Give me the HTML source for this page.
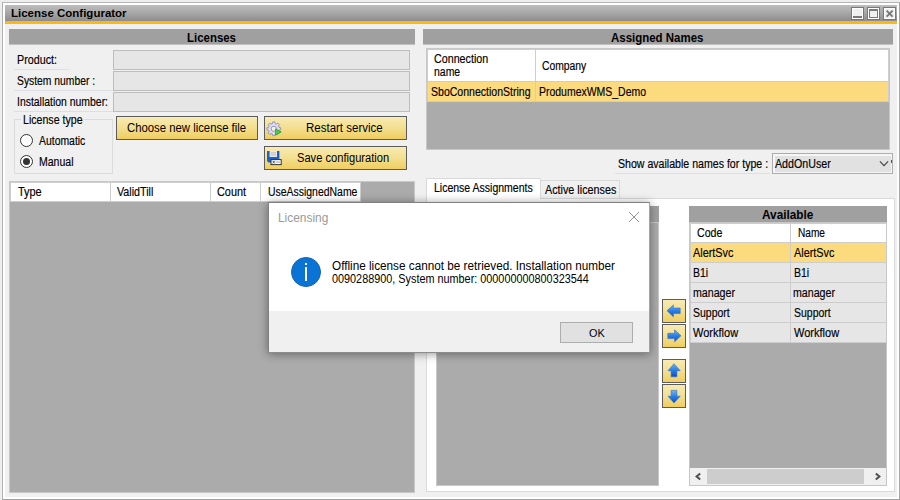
<!DOCTYPE html>
<html lang="en">
<head>
<meta charset="utf-8">
<title>License Configurator</title>
<style>
*{box-sizing:border-box;margin:0;padding:0}
html,body{width:900px;height:500px;overflow:hidden;background:#eee}
body{position:relative;font-family:"Liberation Sans",sans-serif;font-size:12px;color:#000}
.a{position:absolute}
.t{-webkit-text-stroke:0.16px currentColor;position:absolute;white-space:nowrap;line-height:14px;height:14px;transform-origin:0 0}
.b{font-weight:bold;-webkit-text-stroke:0}
.d{-webkit-text-stroke:0}
/* outer frame */
#frame{left:2px;top:2px;width:898px;height:498px;border:1px solid;border-color:#b6b6b6 #a6a6a6 #a0a0a0 #b0b0b0;background:#fff}
#win{left:5px;top:5px;width:892px;height:492px;background:#f0f0f0}
#title{left:5px;top:5px;width:892px;height:16px;background:linear-gradient(#bebebe,#a7a7a7 50%,#8d8d8d)}
#orange{left:5px;top:21px;width:892px;height:3px;background:#fcb813}
.wb{top:7px;width:13px;height:13px;border:1px solid #787878;background:#f0f0f0;box-shadow:inset 0 0 0 1px #fff}
.hdr{background:#a0a0a0;height:16px}
.hs{background:linear-gradient(#a0a0a0,#a0a0a0 15px,#c0c0c0 15px)}
.fld{background:#e6e6e6;border:1px solid #bdbdbd;height:20px;left:113px;width:297px}
.ul{height:1px;background:#dcdfe3}
.grid{background:#ababab;border:1px solid #c8c8c8}
.gl{background:#cdcdcd}
.btn{border:1px solid #5c5c5c;background:linear-gradient(#f7ebb4,#f4df8f 50%,#efcd60);height:24px}
.cell{background:#fff}
.sel{background:#fcdb7f}
.row{background:#e6e6e6}
</style>
</head>
<body>

<svg class="a" width="0" height="0" style="left:0;top:0"><defs>
<linearGradient id="gb" x1="0" y1="0" x2="0" y2="1"><stop offset="0" stop-color="#6db6f8"/><stop offset="0.5" stop-color="#2a7fe6"/><stop offset="1" stop-color="#0a4fc4"/></linearGradient>
<linearGradient id="gbh" x1="0" y1="0" x2="1" y2="0"><stop offset="0" stop-color="#6db6f8"/><stop offset="0.5" stop-color="#2a7fe6"/><stop offset="1" stop-color="#0a4fc4"/></linearGradient>
</defs></svg>
<div class="a" id="frame"></div>
<div class="a" id="win"></div>
<div class="a" id="title"></div>
<div class="a" id="orange"></div>
<span class="t b" id="t_title" style="left:11.1px;top:6px;font-size:11.5px;transform:scaleX(0.9995)">License Configurator</span>

<!-- window buttons -->
<div class="a wb" style="left:851px"></div>
<div class="a wb" style="left:867px"></div>
<div class="a wb" style="left:883px"></div>
<div class="a" style="left:853px;top:16px;width:9px;height:2px;background:#7a7a7a"></div>
<div class="a" style="left:869px;top:9px;width:9px;height:9px;border:1px solid #7a7a7a;border-top-width:2px"></div>
<svg class="a" style="left:885px;top:9px" width="9" height="9" viewBox="0 0 9 9"><path d="M1.6 1.6 L7.6 7.6 M7.6 1.6 L1.6 7.6" stroke="#777" stroke-width="1.9" fill="none"/></svg>

<!-- LEFT: Licenses -->
<div class="a hdr hs" style="left:9px;top:29px;width:406px"></div>
<span class="t b" id="t_lic" style="left:187.0px;top:31px;font-size:12px;transform:scaleX(0.9538)">Licenses</span>

<div class="a fld" style="top:50px"></div>
<div class="a fld" style="top:71px"></div>
<div class="a fld" style="top:92px"></div>
<div class="a ul" style="left:14px;top:69px;width:55px"></div>
<div class="a ul" style="left:14px;top:90px;width:99px"></div>
<div class="a ul" style="left:14px;top:111px;width:99px"></div>
<span class="t" id="t_prod" style="left:16.8px;top:53px;font-size:12px;transform:scaleX(0.8948)">Product:</span>
<span class="t" id="t_sys" style="left:16.8px;top:74px;font-size:12px;transform:scaleX(0.8611)">System number :</span>
<span class="t" id="t_inst" style="left:16.8px;top:95px;font-size:12px;transform:scaleX(0.8689)">Installation number:</span>

<!-- group box -->
<div class="a" style="left:14px;top:119px;width:99px;height:55px;border:1px solid #dcdcdc"></div>
<div class="a" style="left:21px;top:112px;width:63px;height:14px;background:#f0f0f0"></div>
<span class="t" id="t_lt" style="left:22.7px;top:113px;font-size:12px;transform:scaleX(0.8844)">License type</span>
<div class="a" style="left:20px;top:134px;width:13px;height:13px;border:1px solid #333;border-radius:50%;background:#fff"></div>
<div class="a" style="left:20px;top:155px;width:13px;height:13px;border:1px solid #333;border-radius:50%;background:#fff"></div>
<div class="a" style="left:23px;top:158px;width:7px;height:7px;border-radius:50%;background:#333"></div>
<span class="t" id="t_auto" style="left:39.0px;top:134px;font-size:12px;transform:scaleX(0.8677)">Automatic</span>
<span class="t" id="t_man" style="left:39.0px;top:155px;font-size:12px;transform:scaleX(0.8765)">Manual</span>

<!-- buttons -->
<div class="a btn" style="left:116px;top:116px;width:142px"></div>
<div class="a btn" style="left:264px;top:116px;width:143px"></div>
<div class="a btn" style="left:264px;top:146px;width:143px"></div>
<span class="t d" id="t_choose" style="left:127.3px;top:121px;font-size:12px;transform:scaleX(0.9447)">Choose new license file</span>
<span class="t d" id="t_restart" style="left:305.7px;top:121px;font-size:12px;transform:scaleX(0.9584)">Restart service</span>
<span class="t d" id="t_save" style="left:297.1px;top:151px;font-size:12px;transform:scaleX(0.9275)">Save configuration</span>


<svg class="a" style="left:266px;top:121px" width="17" height="16" viewBox="0 0 17 16">
<g transform="translate(0.3,0.3) scale(1.04)"><path d="M6.2 0.6 L8.2 0.6 L8.6 2.2 L9.8 2.7 L11.2 1.8 L12.6 3.2 L11.7 4.6 L12.2 5.8 L13.8 6.2 L13.8 8.2 L12.2 8.6 L11.7 9.8 L12.6 11.2 L11.2 12.6 L9.8 11.7 L8.6 12.2 L8.2 13.8 L6.2 13.8 L5.8 12.2 L4.6 11.7 L3.2 12.6 L1.8 11.2 L2.7 9.8 L2.2 8.6 L0.6 8.2 L0.6 6.2 L2.2 5.8 L2.7 4.6 L1.8 3.2 L3.2 1.8 L4.6 2.7 L5.8 2.2 Z" fill="#dcdcf0" stroke="#8e8eb6" stroke-width="0.9" stroke-linejoin="round"/>
<circle cx="7.2" cy="7.2" r="2.5" fill="#fbf3d6" stroke="#8e8eb6" stroke-width="0.9"/></g>
<path d="M9.6 7.8 L15.2 10.9 L9.6 14.2 Z" fill="#4ccc4c" stroke="#2f9a2f" stroke-width="0.8" stroke-linejoin="round"/>
</svg>
<svg class="a" style="left:266px;top:150px" width="16" height="16" viewBox="0 0 16 16">
<path d="M1 1 L13.4 1 L13.4 12.4 L2.4 12.4 L1 11 Z" fill="#1d62cc"/>
<rect x="3.6" y="1" width="7.4" height="6" fill="#e8e8e8"/>
<rect x="4.6" y="2.4" width="5.4" height="1" fill="#bdbdbd"/>
<rect x="4.6" y="4.4" width="5.4" height="1" fill="#bdbdbd"/>
<rect x="5" y="9.6" width="10.2" height="5" fill="#fff" stroke="#333" stroke-width="1"/>
<path d="M6.6 10.8 L8.8 13.4 M8.8 10.8 L6.6 13.4" stroke="#333" stroke-width="0.8"/>
<rect x="9.6" y="11.4" width="4.4" height="1.4" fill="#bbb"/>
</svg>

<!-- left grid -->
<div class="a grid" style="left:9px;top:181px;width:406px;height:312px"></div>
<div class="a gl" style="left:10px;top:182px;width:351px;height:20px"></div>
<div class="a cell" style="left:11px;top:183px;width:99px;height:18px"></div>
<div class="a cell" style="left:111px;top:183px;width:99px;height:18px"></div>
<div class="a cell" style="left:211px;top:183px;width:49px;height:18px"></div>
<div class="a cell" style="left:261px;top:183px;width:99px;height:18px"></div>
<span class="t" id="t_type" style="left:18.0px;top:185px;font-size:12px;transform:scaleX(0.9110)">Type</span>
<span class="t" id="t_valid" style="left:117.4px;top:185px;font-size:12px;transform:scaleX(0.8922)">ValidTill</span>
<span class="t" id="t_count" style="left:216.5px;top:185px;font-size:12px;transform:scaleX(0.9054)">Count</span>
<span class="t" id="t_use" style="left:267.9px;top:185px;font-size:12px;transform:scaleX(0.8703)">UseAssignedName</span>

<!-- RIGHT: Assigned Names -->
<div class="a hdr hs" style="left:423px;top:29px;width:470px"></div>
<span class="t b" id="t_an" style="left:611.3px;top:31px;font-size:12px;transform:scaleX(0.9555)">Assigned Names</span>
<div class="a grid" style="left:426px;top:48px;width:464px;height:102px"></div>
<div class="a gl" style="left:427px;top:49px;width:462px;height:53px"></div>
<div class="a cell" style="left:428px;top:50px;width:107px;height:31px"></div>
<div class="a cell" style="left:536px;top:50px;width:352px;height:31px"></div>
<div class="a sel" style="left:428px;top:82px;width:107px;height:19px"></div>
<div class="a sel" style="left:536px;top:82px;width:352px;height:19px"></div>
<span class="t" id="t_conn1" style="left:434.3px;top:52px;font-size:12px;transform:scaleX(0.8926)">Connection</span>
<span class="t" id="t_conn2" style="left:434.3px;top:65px;font-size:12px;transform:scaleX(0.8724)">name</span>
<span class="t" id="t_comp" style="left:542.3px;top:59px;font-size:12px;transform:scaleX(0.8625)">Company</span>
<span class="t" id="t_sbo" style="left:431.1px;top:85px;font-size:12px;transform:scaleX(0.8773)">SboConnectionString</span>
<span class="t" id="t_pwms" style="left:539.1px;top:85px;font-size:12px;transform:scaleX(0.8720)">ProdumexWMS_Demo</span>

<span class="t" id="t_show" style="left:618.1px;top:157px;font-size:12px;transform:scaleX(0.8825)">Show available names for type :</span>
<div class="a ul" style="left:615px;top:173px;width:155px"></div>
<div class="a" style="left:772px;top:153px;width:121px;height:21px;background:#f6f6f6;border:1px solid #adadad"></div>
<div class="a" style="left:775px;top:156px;width:116px;height:16px;background:#e1e1e1"></div>
<span class="t" id="t_combo" style="left:775.4px;top:157px;font-size:12px;transform:scaleX(0.8883)">AddOnUser</span>
<svg class="a" style="left:879px;top:160px" width="10" height="7" viewBox="0 0 10 7"><path d="M0.9 1.4 L5 5.6 L9.1 1.4" stroke="#444" stroke-width="1.1" fill="none"/></svg>
<div class="a" style="left:891px;top:160px;width:1px;height:3px;background:#555"></div>

<!-- tabs -->
<div class="a" style="left:426px;top:198px;width:469px;height:294px;background:#fff;border:1px solid #dadada"></div>
<div class="a" style="left:540px;top:180px;width:80px;height:19px;background:#f0f0f0;border:1px solid #d9d9d9"></div>
<div class="a" style="left:426px;top:178px;width:115px;height:21px;background:#fff;border:1px solid #d9d9d9;border-bottom:none"></div>
<span class="t" id="t_tab1" style="left:434.1px;top:181px;font-size:12px;transform:scaleX(0.8755)">License Assignments</span>
<span class="t" id="t_tab2" style="left:544.6px;top:183px;font-size:12px;transform:scaleX(0.8983)">Active licenses</span>

<!-- inner left grid -->
<div class="a grid" style="left:436px;top:222px;width:223px;height:264px"></div>
<div class="a hdr" style="left:436px;top:206px;width:223px"></div>

<!-- arrow buttons -->
<div class="a btn" style="left:662px;top:299px;width:24px"></div>
<div class="a btn" style="left:662px;top:324px;width:24px"></div>
<div class="a btn" style="left:662px;top:359px;width:24px"></div>
<div class="a btn" style="left:662px;top:384px;width:24px"></div>


<svg class="a" style="left:662px;top:299px" width="24" height="24" viewBox="0 0 24 24"><path d="M5 11.7 L11.4 5.9 L11.4 9 L18.2 9 L18.2 14.6 L11.4 14.6 L11.4 17.8 Z" fill="url(#gb)" stroke="#2c6fd0" stroke-width="0.6"/></svg>
<svg class="a" style="left:662px;top:324px" width="24" height="24" viewBox="0 0 24 24"><path d="M19 11.7 L12.6 5.8 L12.6 9.3 L5.8 9.3 L5.8 14.6 L12.6 14.6 L12.6 17.7 Z" fill="url(#gb)" stroke="#2c6fd0" stroke-width="0.6"/></svg>
<svg class="a" style="left:662px;top:359px" width="24" height="24" viewBox="0 0 24 24"><path d="M12 4.7 L18.2 11.7 L14.9 11.7 L14.9 17.8 L9.1 17.8 L9.1 11.7 L6 11.7 Z" fill="url(#gb)" stroke="#2c6fd0" stroke-width="0.6"/></svg>
<svg class="a" style="left:662px;top:384px" width="24" height="24" viewBox="0 0 24 24"><path d="M12 18.9 L18.2 12.2 L14.9 12.2 L14.9 6.4 L9.1 6.4 L9.1 12.2 L6 12.2 Z" fill="url(#gb)" stroke="#2c6fd0" stroke-width="0.6"/></svg>

<!-- Available grid -->
<div class="a hdr" style="left:689px;top:206px;width:198px"></div>
<span class="t b" id="t_avail" style="left:761.5px;top:208px;font-size:12px;transform:scaleX(0.9837)">Available</span>
<div class="a grid" style="left:689px;top:222px;width:198px;height:264px"></div>
<div class="a gl" style="left:690px;top:223px;width:196px;height:20px"></div>
<div class="a cell" style="left:691px;top:224px;width:99px;height:18px"></div>
<div class="a cell" style="left:791px;top:224px;width:95px;height:18px"></div>
<span class="t" id="t_code" style="left:697.2px;top:226px;font-size:12px;transform:scaleX(0.8854)">Code</span>
<span class="t" id="t_name" style="left:798.3px;top:226px;font-size:12px;transform:scaleX(0.8433)">Name</span>

<div class="a gl" style="left:690px;top:242px;width:196px;height:101px"></div>
<div class="a sel" style="left:691px;top:243px;width:99px;height:19px"></div>
<div class="a sel" style="left:791px;top:243px;width:95px;height:19px"></div>
<span class="t" id="t_r0a" style="left:693.3px;top:246px;font-size:12px;transform:scaleX(0.9063)">AlertSvc</span>
<span class="t" id="t_r0b" style="left:793.6px;top:246px;font-size:12px;transform:scaleX(0.9063)">AlertSvc</span>
<div class="a row" style="left:691px;top:263px;width:99px;height:19px"></div>
<div class="a row" style="left:791px;top:263px;width:95px;height:19px"></div>
<span class="t" id="t_r1a" style="left:693.4px;top:266px;font-size:12px;transform:scaleX(0.8764)">B1i</span>
<span class="t" id="t_r1b" style="left:793.7px;top:266px;font-size:12px;transform:scaleX(0.8764)">B1i</span>
<div class="a row" style="left:691px;top:283px;width:99px;height:19px"></div>
<div class="a row" style="left:791px;top:283px;width:95px;height:19px"></div>
<span class="t" id="t_r2a" style="left:693.0px;top:286px;font-size:12px;transform:scaleX(0.8865)">manager</span>
<span class="t" id="t_r2b" style="left:793.3px;top:286px;font-size:12px;transform:scaleX(0.8865)">manager</span>
<div class="a row" style="left:691px;top:303px;width:99px;height:19px"></div>
<div class="a row" style="left:791px;top:303px;width:95px;height:19px"></div>
<span class="t" id="t_r3a" style="left:693.4px;top:306px;font-size:12px;transform:scaleX(0.8732)">Support</span>
<span class="t" id="t_r3b" style="left:793.7px;top:306px;font-size:12px;transform:scaleX(0.8732)">Support</span>
<div class="a row" style="left:691px;top:323px;width:99px;height:19px"></div>
<div class="a row" style="left:791px;top:323px;width:95px;height:19px"></div>
<span class="t" id="t_r4a" style="left:693.4px;top:326px;font-size:12px;transform:scaleX(0.9181)">Workflow</span>
<span class="t" id="t_r4b" style="left:793.7px;top:326px;font-size:12px;transform:scaleX(0.9181)">Workflow</span>
<div class="a" style="left:690px;top:468px;width:196px;height:17px;background:#f0f0f0"></div>
<div class="a" style="left:707px;top:469px;width:157px;height:15px;background:#cdcdcd"></div>
<svg class="a" style="left:694px;top:472px" width="8" height="10" viewBox="0 0 8 10"><path d="M6.2 1.6 L2.6 4.6 L6.2 7.6" stroke="#505050" stroke-width="2" fill="none"/></svg>
<svg class="a" style="left:874px;top:472px" width="8" height="10" viewBox="0 0 8 10"><path d="M1.8 1.6 L5.4 4.6 L1.8 7.6" stroke="#505050" stroke-width="2" fill="none"/></svg>

<!-- dialog -->
<div class="a" id="dlg" style="box-shadow:0 1px 9px rgba(0,0,0,0.42);left:268px;top:202px;width:382px;height:151px;background:#fff;border:1px solid #808080;border-right-color:#a4a4a4;border-bottom-color:#8c8c8c"></div>
<div class="a" style="left:269px;top:311px;width:380px;height:41px;background:#f0f0f0"></div>
<span class="t d" id="t_dlgt" style="left:277.6px;top:211px;font-size:12px;transform:scaleX(0.9920);color:#999">Licensing</span>
<svg class="a" style="left:628px;top:211px" width="12" height="12" viewBox="0 0 12 12"><path d="M1 1 L11 11 M11 1 L1 11" stroke="#858585" stroke-width="0.9" fill="none"/></svg>
<div class="a" style="left:291px;top:257px;width:30px;height:30px;border-radius:50%;background:#0a74d6;border:1px solid #1464b0"></div>
<div class="a" style="left:305px;top:263px;width:2px;height:2px;background:#fff"></div>
<div class="a" style="left:305px;top:267px;width:2px;height:14px;background:#fff"></div>
<span class="t d" id="t_msg1" style="left:332.0px;top:259px;font-size:12px;transform:scaleX(0.9783);color:#000">Offline license cannot be retrieved. Installation number</span>
<span class="t d" id="t_msg2" style="left:332.0px;top:272px;font-size:12px;transform:scaleX(0.9035);color:#000">0090288900, System number: 000000000800323544</span>
<div class="a" style="left:560px;top:322px;width:73px;height:21px;background:#e1e1e1;border:1px solid #adadad"></div>
<span class="t d" id="t_ok" style="left:588.8px;top:326px;font-size:11px;transform:scaleX(0.9870);color:#000">OK</span>
</body>
</html>
